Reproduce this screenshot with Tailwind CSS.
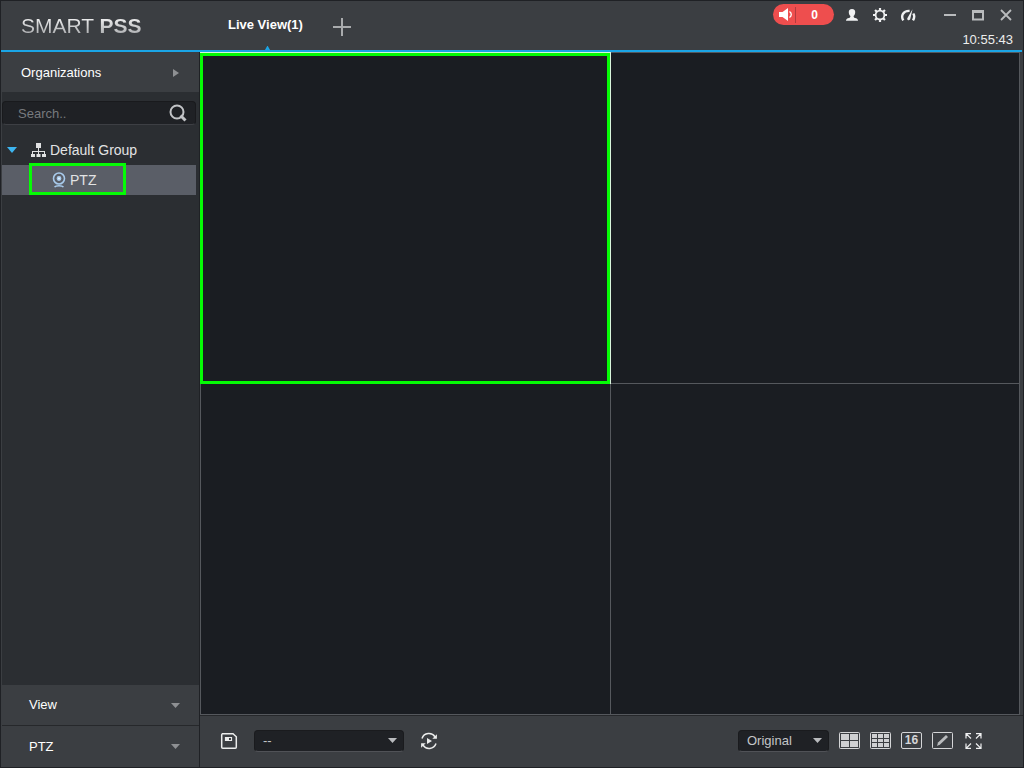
<!DOCTYPE html>
<html lang="en">
<head>
    <meta charset="UTF-8">
    <meta name="viewport" content="width=device-width, initial-scale=1.0">
    <title>Live View - Smart PSS</title>
    <script src="https://cdn.jsdelivr.net/npm/@tailwindcss/browser@4"></script>
</head>
<body class="flex h-screen flex-col overflow-hidden border border-[#1f2125] bg-[#3b3e42] font-['Liberation_Sans',Arial,sans-serif] text-[13px] leading-4 text-white">

    <!-- Title bar -->
    <header class="mr-px flex h-[51px] shrink-0 items-stretch border-b-2 border-[#1aa5e6]">
        <h1 class="w-[199px] shrink-0 self-center bg-gradient-to-b from-white to-[#a0a2a5] bg-clip-text pl-5 text-[21px] leading-6 text-transparent">SMART <b>PSS</b></h1>

        <nav class="flex items-stretch">
            <a href="#" class="relative flex w-[133px] justify-start pt-4 pl-7 font-bold">
                Live View(1)
                <svg class="absolute bottom-[-2px] left-16 h-[6px] w-[7px]" viewBox="0 0 7 6" fill="none" stroke="#1aa5e6" stroke-width="2"><path d="M1 6L3.500 1.500L6 6" /></svg>
            </a>
            <button type="button" aria-label="Add tab" class="self-center pt-[2px]">
                <svg class="h-[18px] w-[18px]" viewBox="0 0 18 18" fill="#a9abad"><path d="M8 0h2v8h8v2h-8v8H8v-8H0V8h8z" /></svg>
            </button>
        </nav>

        <div class="ml-auto flex flex-col items-end pt-[3px] pr-[9px]">
            <div class="flex items-center pr-px">
                <button type="button" aria-label="Alarms" class="mr-[10px] flex h-[21px] w-[61px] items-center rounded-full bg-[#ee4e4e] text-xs font-bold">
                    <svg class="ml-[6px] h-[13px] w-[14px] shrink-0" viewBox="0 0 14 13"><path d="M0 4h3.500L9 0v13L3.500 9H0z" fill="#fff" /><path d="M10.500 3.500c2.400 1.700 2.400 4.300 0 6" fill="none" stroke="#fff" stroke-width="1.300" /></svg>
                    <span class="ml-[2px] h-4 border-l border-[#b33b3f]"></span>
                    <span class="flex-1 pr-px text-center">0</span>
                </button>
                <button type="button" aria-label="User" class="mr-[12px]">
                    <svg class="h-4 w-4" viewBox="0 0 16 16" fill="#f0f1f2"><path d="M8 2c2.300 0 3.400 1.500 3.200 3.500C11.100 7.300 10.300 8.300 9.600 9c0 1.100.4 1.700 1.400 1.900 2 .4 3 1 3 2.900H2c0-1.900 1-2.500 3-2.900 1-.2 1.400-.8 1.400-1.900C5.700 8.300 4.900 7.300 4.800 5.500 4.600 3.500 5.700 2 8 2z" /></svg>
                </button>
                <button type="button" aria-label="Settings" class="mr-[12px]">
                    <svg class="h-4 w-4" viewBox="0 0 16 16" fill="none" stroke="#f0f1f2"><circle cx="8" cy="8" r="4.400" stroke-width="1.800" /><path d="M8 1v3M8 12v3M1 8h3M12 8h3M3.050 3.050l2 2M10.950 10.950l2 2M3.050 12.950l2-2M10.950 5.050l2-2" stroke-width="2.200" /></svg>
                </button>
                <button type="button" aria-label="Performance" class="mr-[28px]">
                    <svg class="h-4 w-4" viewBox="0 0 16 16" fill="none" stroke="#f0f1f2"><path d="M3.300 13.300C.6 9 3 3.600 9.600 3.900M13.300 6.500c1.200 2 1.200 4.500-.3 6.800" stroke-width="2.400" /><path d="M12.500 2.300L10.300 11.800c-.4 2.200-3.600 1.700-3-.6z" fill="#f0f1f2" stroke="none" /></svg>
                </button>
                <button type="button" aria-label="Minimize" class="mr-4">
                    <svg class="h-3 w-3" viewBox="0 0 12 12" fill="#b9bbbd"><path d="M0 5h12v2H0z" /></svg>
                </button>
                <button type="button" aria-label="Maximize" class="mr-4">
                    <svg class="h-3 w-3" viewBox="0 0 12 12" fill="none" stroke="#b9bbbd"><path d="M1 2.500h10v8H1z" stroke-width="2" /><path d="M0 2.500h12" stroke-width="3" /></svg>
                </button>
                <button type="button" aria-label="Close">
                    <svg class="h-3 w-3" viewBox="0 0 12 12" fill="none" stroke="#b9bbbd" stroke-width="1.800"><path d="M1 1l10 10M11 1L1 11" /></svg>
                </button>
            </div>
            <time class="mt-[7px] text-[#eceded]">10:55:43</time>
        </div>
    </header>

    <div class="flex min-h-0 flex-1">
        <!-- Device tree -->
        <aside class="flex w-[199px] shrink-0 flex-col border-r border-l border-r-[#1f2125] border-l-[#3b3e42] bg-[#2b2e32]">
            <button type="button" class="flex h-10 shrink-0 items-center justify-between bg-[#3b3e42] pt-px pr-5 pl-[19px]">
                Organizations
                <svg class="h-2 w-[6px]" viewBox="0 0 6 8" fill="#8e9093"><path d="M0 0l6 4-6 4z" /></svg>
            </button>

            <label class="mt-[9px] mr-[3px] flex h-6 shrink-0 items-center rounded-sm border border-[#191a1d] border-b-[#3d3f44] bg-[#1f2125] pr-2 pl-[15px]">
                <input type="text" placeholder="Search.." aria-label="Search" class="w-full min-w-0 pt-px leading-5 outline-none placeholder:text-[#777a7e]">
                <svg class="h-[18px] w-[18px] shrink-0" viewBox="0 0 18 18" fill="none" stroke="#c2c4c7"><circle cx="8" cy="8" r="6.500" stroke-width="2" /><path d="M11.500 11.500l5 5" stroke-width="3" /></svg>
            </label>

            <ul class="mt-[10px] mr-[3px] text-sm leading-5 text-[#e2e3e4]">
                <li>
                    <a href="#" class="flex h-[30px] items-center pl-[5px]">
                        <svg class="h-[6px] w-[10px]" viewBox="0 0 10 6" fill="#3db5f0"><path d="M0 0h10L5 6z" /></svg>
                        <svg class="mr-1 ml-[14px] h-[14px] w-[15px]" viewBox="0 0 15 14" fill="#e0e1e2"><path d="M5 0h5v5H5zM7 5h1v3h6v3h1v3h-4v-3h2V9H8v2h1.500v3h-4v-3H7V9H2v2h2v3H0v-3h1V8h6z" /></svg>
                        Default Group
                    </a>
                </li>
                <li class="bg-[#5a5e67]">
                    <a href="#" class="relative flex h-[30px] items-center pl-[50px]">
                        <svg class="mr-1 h-4 w-[14px]" viewBox="0 0 14 16" fill="none" stroke="#a8cbec"><circle cx="7" cy="6.500" r="5.500" stroke-width="1.600" /><circle cx="7" cy="6.500" r="1.700" fill="#e4f2ff" stroke-width="1.400" /><path d="M2.500 15.200c1.300-2 7.700-2 9 0" stroke-width="1.500" /></svg>
                        PTZ
                        <span class="absolute -top-[2px] bottom-0 left-[27px] w-[97px] border-3 border-[#05fb05]"></span>
                    </a>
                </li>
            </ul>

            <div class="mt-auto shrink-0">
                <button type="button" class="flex h-[41px] w-full items-center justify-between border-b border-[#26282b] bg-[#3b3e42] pr-[19px] pl-[27px]">
                    View
                    <svg class="h-[5px] w-[9px]" viewBox="0 0 9 5" fill="#8e9093"><path d="M0 0h9L4.500 5z" /></svg>
                </button>
                <button type="button" class="flex h-[41px] w-full items-center justify-between bg-[#3b3e42] pr-[19px] pl-[27px]">
                    PTZ
                    <svg class="h-[5px] w-[9px]" viewBox="0 0 9 5" fill="#8e9093"><path d="M0 0h9L4.500 5z" /></svg>
                </button>
            </div>
        </aside>

        <main class="flex min-w-0 flex-1 flex-col">
            <!-- Video windows -->
            <div class="mr-[3px] grid min-h-0 flex-1 grid-cols-2 grid-rows-2 gap-px border border-[#55585d] bg-[#55585d]">
                <div class="relative bg-[#1a1d22]">
                    <span class="absolute -inset-px border border-[#d8f5dc]"></span>
                    <span class="absolute top-0 right-0 -bottom-px -left-px border-3 border-[#05fb05]"></span>
                </div>
                <div class="bg-[#1a1d22]"></div>
                <div class="bg-[#1a1d22]"></div>
                <div class="bg-[#1a1d22]"></div>
            </div>

            <!-- Bottom toolbar -->
            <div class="flex h-[52px] shrink-0 items-center border-t border-[#26282b] pr-[41px] pb-[2px] pl-5">
                <button type="button" aria-label="Save view">
                    <svg class="h-4 w-[18px]" viewBox="0 0 18 16" fill="none" stroke="#eceded"><path d="M2 .8h11l3.300 3v10.400q0 1-1 1H2.700q-1 0-1-1V1.800q0-1 1-1" stroke-width="1.500" /><path d="M5.500 4.500h6v3h-6z" stroke-width="1.200" /><path d="M5.500 4.500h3v3h-3z" fill="#eceded" /></svg>
                </button>
                <div class="relative ml-4">
                    <select aria-label="View" class="block h-[22px] w-[150px] appearance-none rounded-sm border border-[#1a1b1e] border-b-[#505257] bg-[#1f2125] pl-2 leading-4 text-[#c4c6c8]">
                        <option>--</option>
                    </select>
                    <svg class="pointer-events-none absolute top-2 right-[7px] h-[5px] w-[9px]" viewBox="0 0 9 5" fill="#b9bbbe"><path d="M0 0h9L4.500 5z" /></svg>
                </div>
                <button type="button" aria-label="Start tour" class="ml-4">
                    <svg class="h-[18px] w-[18px]" viewBox="0 0 18 18" fill="none" stroke="#eceded" stroke-width="1.500"><path d="M2 6.500C4 .5 12 0 15 4.800M16 11.500C14 17.500 6 18 3 13.200" /><path d="M16.900 2.200v4.600h-4.600zM1.100 15.800v-4.600h4.600zM7 6l5 3-5 3z" fill="#eceded" stroke="none" /></svg>
                </button>

                <div class="ml-auto flex items-center gap-[10px]">
                    <div class="relative">
                        <select aria-label="Picture scale" class="block h-[22px] w-[91px] appearance-none rounded-sm border border-[#1a1b1e] border-b-[#505257] bg-[#1f2125] pl-2 leading-4 text-[#c4c6c8]">
                            <option>Original</option>
                        </select>
                        <svg class="pointer-events-none absolute top-2 right-[7px] h-[5px] w-[9px]" viewBox="0 0 9 5" fill="#b9bbbe"><path d="M0 0h9L4.500 5z" /></svg>
                    </div>
                    <button type="button" aria-label="4 windows">
                        <svg class="h-[17px] w-[21px]" viewBox="0 0 21 17"><rect x=".5" y=".5" width="20" height="16" rx="1" fill="none" stroke="#d4d5d7" /><path d="M2 2h8v6H2zM11 2h8v6h-8zM2 9h8v6H2zM11 9h8v6h-8z" fill="#cfd0d2" /></svg>
                    </button>
                    <button type="button" aria-label="9 windows">
                        <svg class="h-[17px] w-[21px]" viewBox="0 0 21 17"><rect x=".5" y=".5" width="20" height="16" rx="1" fill="none" stroke="#d4d5d7" /><path d="M2 2h5v4H2zM8 2h5v4H8zM14 2h5v4h-5zM2 7h5v3H2zM8 7h5v3H8zM14 7h5v3h-5zM2 11h5v4H2zM8 11h5v4H8zM14 11h5v4h-5z" fill="#cfd0d2" /></svg>
                    </button>
                    <button type="button" class="h-[17px] w-[21px] rounded-[2px] border border-[#d4d5d7] text-center text-xs leading-[15px] font-bold text-[#d4d5d7]">16</button>
                    <button type="button" aria-label="Custom layout">
                        <svg class="h-[17px] w-[21px]" viewBox="0 0 21 17"><rect x=".5" y=".5" width="20" height="16" rx="1" fill="none" stroke="#d4d5d7" /><path d="M5 14l1-3.500L14 3l2 2-8 7.500z" fill="#b9bbbd" /></svg>
                    </button>
                    <button type="button" aria-label="Full screen" class="ml-[2px]">
                        <svg class="h-4 w-[17px]" viewBox="0 0 17 16" fill="none" stroke="#f0f1f2" stroke-width="1.200"><path d="M1 5.500V.6h5M11 .6h5v4.900M16 10.500v4.900h-5M6 15.400H1v-4.900M1 .6l5 4.900M16 .6l-5 4.900M16 15.400l-5-4.900M1 15.400l5-4.900" /></svg>
                    </button>
                </div>
            </div>
        </main>
    </div>
</body>
</html>
